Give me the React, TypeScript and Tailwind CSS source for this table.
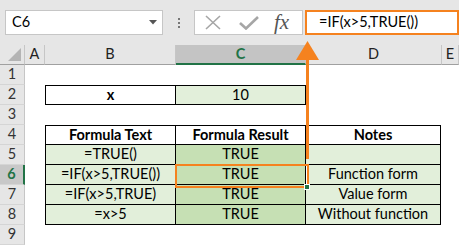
import React from "react";

const ORANGE = "#f5821f";

const rows = [1, 2, 3, 4, 5, 6, 7, 8, 9];

type Cell = { text: string; bold?: boolean; bg?: string };

const table: Record<number, { b: Cell; c: Cell; d?: Cell }> = {
  2: { b: { text: "x", bold: true }, c: { text: "10", bg: "light" } },
  4: {
    b: { text: "Formula Text", bold: true },
    c: { text: "Formula Result", bold: true },
    d: { text: "Notes", bold: true },
  },
  5: { b: { text: "=TRUE()", bg: "light" }, c: { text: "TRUE", bg: "mid" }, d: { text: "", bg: "light" } },
  6: { b: { text: "=IF(x>5,TRUE())", bg: "light" }, c: { text: "TRUE", bg: "mid" }, d: { text: "Function form", bg: "light" } },
  7: { b: { text: "=IF(x>5,TRUE)", bg: "light" }, c: { text: "TRUE", bg: "mid" }, d: { text: "Value form", bg: "light" } },
  8: { b: { text: "=x>5", bg: "light" }, c: { text: "TRUE", bg: "mid" }, d: { text: "Without function", bg: "light" } },
};

function bgClass(bg?: string) {
  if (bg === "light") return "bg-[#e2efda]";
  if (bg === "mid") return "bg-[#c6e0b4]";
  return "bg-white";
}

function TableCell({ cell, width, first, topEdge }: { cell?: Cell; width: string; first?: boolean; topEdge?: boolean }) {
  if (!cell) return <div className={`${width} h-full bg-white`} />;
  return (
    <div
      className={`${width} h-full flex items-center justify-center border-black border-r border-b ${first ? "border-l" : ""} ${topEdge ? "border-t" : ""} ${bgClass(cell.bg)} ${cell.bold ? "font-bold" : ""}`}
    >
      {cell.text}
    </div>
  );
}

function HeaderCell({ label, width, selected }: { label: string; width: string; selected?: boolean }) {
  return (
    <div
      className={`${width} h-full flex items-center justify-center border-r border-[#c6c6c6] ${
        selected ? "bg-[#c4c4c4] text-[#217346] font-bold border-b-2 border-b-[#217346]" : "border-b border-b-[#a0a0a0] text-[#222]"
      }`}
    >
      {label}
    </div>
  );
}

export default function App() {
  return (
    <div
      className="relative w-[459px] h-[246px] overflow-hidden bg-white text-[14.5px] leading-none text-black"
      style={{ fontFamily: "Lato, 'Open Sans', sans-serif" }}
    >
      {/* Formula bar */}
      <div className="h-[45px] bg-[#e6e6e6] flex items-start pt-[10px]">
        <div className="ml-[5px] w-[158px] h-[25px] bg-white border border-[#c6c6c6] flex items-center justify-between pl-[6px] pr-[5px]">
          <span>C6</span>
          <svg width="8" height="5" viewBox="0 0 8 5">
            <polygon points="0,0 8,0 4,4.5" fill="#555" />
          </svg>
        </div>
        <div className="w-[31px] h-[25px] flex flex-col items-center justify-center gap-[2px]">
          <span className="w-[2px] h-[2px] bg-[#777]" />
          <span className="w-[2px] h-[2px] bg-[#777]" />
          <span className="w-[2px] h-[2px] bg-[#777]" />
        </div>
        <div className="w-[109px] h-[25px] bg-white border border-[#c6c6c6] flex items-center">
          <svg className="ml-[10px]" width="16" height="15" viewBox="0 0 16 15">
            <path d="M1 1 L15 14 M15 1 L1 14" stroke="#a6a6a6" strokeWidth="1.6" fill="none" />
          </svg>
          <svg className="ml-[18px]" width="20" height="14" viewBox="0 0 20 14">
            <path d="M1 7 L7 12.5 L19 1" stroke="#a6a6a6" strokeWidth="2.6" fill="none" />
          </svg>
          <span
            className="ml-[15px] text-[21px] italic text-[#555] leading-none"
            style={{ fontFamily: "'Liberation Serif', serif" }}
          >
            fx
          </span>
        </div>
        <div className="ml-[2px] flex-1 h-[25px] bg-white border-2 border-[#f5821f] flex items-center pl-[12px]">
          =IF(x&gt;5,TRUE())
        </div>
      </div>

      {/* Column headers */}
      <div className="h-[20px] flex bg-[#e6e6e6] text-[#222]">
        <div className="w-[25px] h-full border-r border-b border-[#a0a0a0] border-r-[#c6c6c6] flex items-end justify-end pr-[3px] pb-[3px]">
          <svg width="13" height="13" viewBox="0 0 13 13">
            <polygon points="13,0 13,13 0,13" fill="#b4b4b4" />
          </svg>
        </div>
        <HeaderCell label="A" width="w-[20px]" />
        <HeaderCell label="B" width="w-[131px]" />
        <HeaderCell label="C" width="w-[130px]" selected />
        <HeaderCell label="D" width="w-[136px]" />
        <HeaderCell label="E" width="flex-1" />
      </div>

      {/* Rows */}
      {rows.map((r) => {
        const t = table[r];
        const top = r === 2 || r === 4;
        return (
          <div key={r} className="h-[20px] flex">
            <div
              className={`w-[25px] h-full flex items-center justify-center border-b border-[#d5d5d5] ${
                r === 6 ? "bg-[#c8c8c8] text-[#217346] font-bold border-r-2 border-r-[#217346]" : "bg-[#e6e6e6] text-[#333] border-r border-r-[#c6c6c6]"
              }`}
            >
              {r}
            </div>
            <div className="w-[20px] h-full" />
            {t ? (
              <>
                <TableCell cell={t.b} width="w-[131px]" first topEdge={top} />
                <TableCell cell={t.c} width="w-[130px]" topEdge={top} />
                <TableCell cell={t.d} width="w-[135px]" topEdge={top} />
              </>
            ) : null}
            <div className="flex-1 h-full" />
          </div>
        );
      })}

      {/* Active cell C6 */}
      <div className="absolute left-[175px] top-[164px] w-[134px] h-[24px] border-2 border-[#f5821f]">
        <div className="w-full h-full border-r border-white" />
      </div>
      <div className="absolute left-[304px] top-[184px] w-[6px] h-[6px] bg-[#217346] border border-white" />

      {/* Arrow from cell to formula bar */}
      <div className="absolute left-[306px] top-[58px] w-[3px] h-[101px]" style={{ background: ORANGE }} />
      <svg className="absolute left-[296px] top-[41px]" width="23" height="19" viewBox="0 0 23 19">
        <polygon points="11.5,0 23,19 0,19" fill={ORANGE} />
      </svg>
    </div>
  );
}
